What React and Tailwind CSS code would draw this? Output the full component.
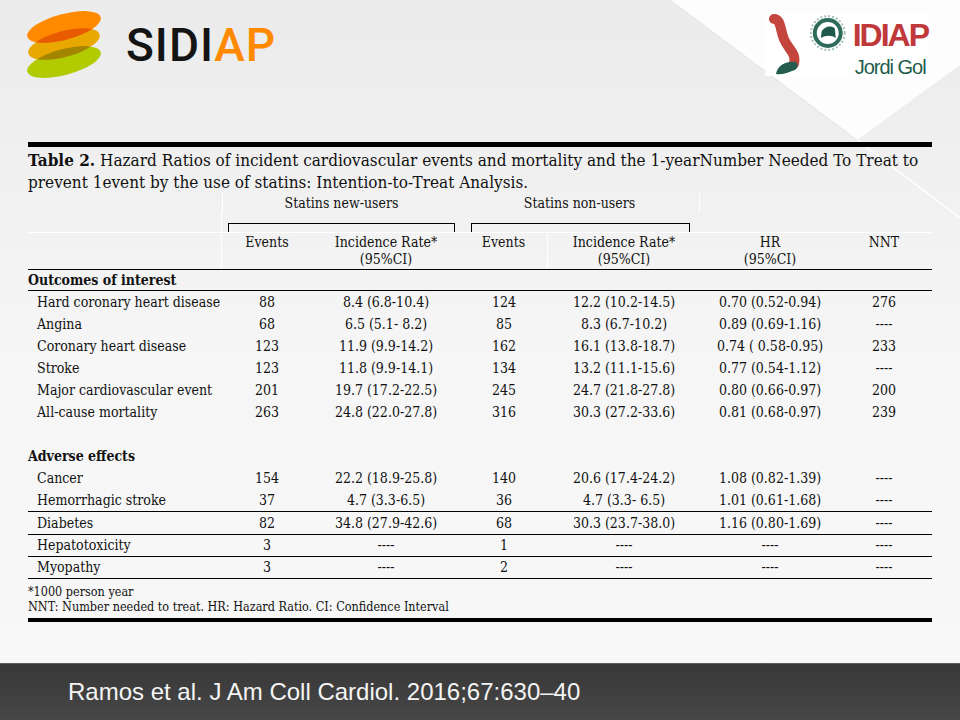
import React from "react";

const COLS = "grid grid-cols-[194px_90px_148px_88px_152px_140px_88px]";

const outcomes = [
  ["Hard coronary heart disease", "88", "8.4 (6.8-10.4)", "124", "12.2 (10.2-14.5)", "0.70 (0.52-0.94)", "276"],
  ["Angina", "68", "6.5 (5.1- 8.2)", "85", "8.3 (6.7-10.2)", "0.89 (0.69-1.16)", "----"],
  ["Coronary heart disease", "123", "11.9 (9.9-14.2)", "162", "16.1 (13.8-18.7)", "0.74 ( 0.58-0.95)", "233"],
  ["Stroke", "123", "11.8 (9.9-14.1)", "134", "13.2 (11.1-15.6)", "0.77 (0.54-1.12)", "----"],
  ["Major cardiovascular event", "201", "19.7 (17.2-22.5)", "245", "24.7 (21.8-27.8)", "0.80 (0.66-0.97)", "200"],
  ["All-cause mortality", "263", "24.8 (22.0-27.8)", "316", "30.3 (27.2-33.6)", "0.81 (0.68-0.97)", "239"],
];

// last flag = black rule under the row
const adverse = [
  ["Cancer", "154", "22.2 (18.9-25.8)", "140", "20.6 (17.4-24.2)", "1.08 (0.82-1.39)", "----", false],
  ["Hemorrhagic stroke", "37", "4.7 (3.3-6.5)", "36", "4.7 (3.3- 6.5)", "1.01 (0.61-1.68)", "----", true],
  ["Diabetes", "82", "34.8 (27.9-42.6)", "68", "30.3 (23.7-38.0)", "1.16 (0.80-1.69)", "----", true],
  ["Hepatotoxicity", "3", "----", "1", "----", "----", "----", true],
  ["Myopathy", "3", "----", "2", "----", "----", "----", true],
];

const Row = ({ cells, ruled, tall }) => (
  <div
    className={`${COLS} ${tall ? "h-[23px]" : "h-[22px]"} items-center ${
      ruled ? "border-b border-black" : ""
    }`}
  >
    <div className="pl-[9px] whitespace-nowrap">{cells[0]}</div>
    {cells.slice(1, 7).map((c, i) => (
      <div key={i} className="text-center whitespace-nowrap">
        {c}
      </div>
    ))}
  </div>
);

const SidiapLogo = () => (
  <div className="flex items-center gap-[22px]">
    <svg width="80" height="72" viewBox="0 0 80 72" className="isolate">
      <ellipse cx="40" cy="54" rx="38" ry="13" fill="#b2ca00" transform="rotate(-15 40 54)" className="mix-blend-multiply" />
      <ellipse cx="40" cy="36" rx="37" ry="13" fill="#e9a800" transform="rotate(-15 40 36)" className="mix-blend-multiply" />
      <ellipse cx="40" cy="19" rx="38" ry="13" fill="#ff8a00" transform="rotate(-15 40 19)" className="mix-blend-multiply" />
    </svg>
    <div className="font-['Roboto',sans-serif] font-medium text-[46px] leading-none tracking-[1px] mt-[2px]">
      <span className="text-[#141414]">SIDI</span>
      <span className="text-[#ff8a00]">AP</span>
    </div>
  </div>
);

const IdiapLogo = () => (
  <div className="mt-[5px] w-[163px] h-[63px] bg-white flex">
    <svg width="88" height="63" viewBox="0 0 88 63">
      <path
        d="M9 6 C16 6 15 16 19 26 C23 36 32 40 29 51"
        fill="none"
        stroke="#c4443e"
        strokeWidth="10"
        strokeLinecap="round"
      />
      <path d="M11 61 C13 52 21 48 31 49 C35 53 32 57 27 58 C22 60 17 62 11 61 Z" fill="#245d4e" />
      <circle cx="63" cy="20" r="13" fill="none" stroke="#2d6b5a" strokeWidth="4" />
      <circle cx="63" cy="20" r="17" fill="none" stroke="#5f8f80" strokeWidth="2" strokeDasharray="2 2" opacity="0.55" />
      <path d="M56 25 L57 18 C60 13 66 12 70 15 L71 25 C67 22 61 22 56 25 Z" fill="#1d5a4b" />
    </svg>
    <div className="flex flex-col items-start font-['Liberation_Sans',sans-serif]">
      <div className="text-[#c0393a] font-bold text-[32px] leading-none tracking-[-2px] mt-[6px]">IDIAP</div>
      <div className="text-[#1f5c4c] text-[20px] leading-none tracking-[-1px] mt-[6px] ml-[2px]">Jordi Gol</div>
    </div>
  </div>
);

export default function App() {
  return (
    <div className="relative w-[960px] h-[720px] overflow-hidden bg-gradient-to-b from-[#ebebeb] via-[#f6f6f6] to-[#f8f8f8] flex flex-col">
      {/* background folds */}
      <svg className="absolute left-0 top-0" width="960" height="663" viewBox="0 0 960 663">
        <polygon points="670,0 857,140 960,65 960,0" fill="#fdfdfd" />
        <line x1="857" y1="140" x2="960" y2="218" stroke="#ffffff" strokeWidth="1.5" />
        <line x1="670" y1="0" x2="857" y2="140" stroke="#e2e2e2" strokeWidth="1" />
      </svg>

      {/* logos */}
      <div className="relative h-[142px] flex justify-between items-start pl-[24px] pr-[32px] pt-[8px]">
        <SidiapLogo />
        <IdiapLogo />
      </div>

      {/* table */}
      <div className="relative px-[28px] text-[#111] font-['DejaVu_Serif_Condensed','Liberation_Serif',serif] text-[14px]">
        <div className="h-[5px] bg-black" />
        <p className="mt-[2px] text-[17px] leading-[22px]">
          <span className="font-bold">Table 2.</span> Hazard Ratios of incident cardiovascular events and mortality and the 1-yearNumber Needed To Treat to prevent 1event by the use of statins: Intention-to-Treat Analysis.
        </p>

        <div className={`${COLS} h-[20px] leading-[20px]`}>
          <div />
          <div className="col-span-2 text-center border-l border-white">Statins new-users</div>
          <div className="col-span-2 text-center border-r border-white">Statins non-users</div>
        </div>
        <div className={`${COLS} h-[19px]`}>
          <div className="border-r border-white" />
          <div className="col-span-2 pl-[6px] pr-[5px]">
            <div className="mt-[10px] h-[9px] border-t border-x border-black" />
          </div>
          <div className="col-span-2 pl-[11px] pr-[10px]">
            <div className="mt-[10px] h-[9px] border-t border-x border-black" />
          </div>
        </div>

        <div className={`${COLS} h-[38px] border-t border-white border-b border-b-black pt-[1px] leading-[17px] text-center`}>
          <div className="border-r border-white" />
          <div>Events</div>
          <div>
            Incidence Rate*
            <br />
            (95%CI)
          </div>
          <div className="border-r border-white">Events</div>
          <div>
            Incidence Rate*
            <br />
            (95%CI)
          </div>
          <div>
            HR
            <br />
            (95%CI)
          </div>
          <div>NNT</div>
        </div>

        <div className="h-[21px] leading-[20px] font-bold border-b border-black">Outcomes of interest</div>
        {outcomes.map((r) => (
          <Row key={r[0]} cells={r} />
        ))}
        <div className="h-[22px]" />
        <div className="h-[22px] leading-[22px] font-bold">Adverse effects</div>
        {adverse.map((r) => (
          <Row key={r[0]} cells={r} ruled={r[7]} tall={r[0] === "Hemorrhagic stroke" || r[0] === "Diabetes"} />
        ))}

        <div className="pt-[5px] text-[12.5px] leading-[15px]">
          <p>*1000 person year</p>
          <p>NNT: Number needed to treat. HR: Hazard Ratio. CI: Confidence Interval</p>
        </div>
        <div className="mt-[4px] h-[4px] bg-black" />
      </div>

      {/* footer */}
      <div className="relative mt-auto h-[57px] bg-gradient-to-b from-[#383838] to-[#474747] border-t border-[#5c5c5c] flex items-center pl-[68px]">
        <span className="text-[#f4f4f4] text-[24px] font-['Liberation_Sans',sans-serif]">
          Ramos et al. J Am Coll Cardiol. 2016;67:630–40
        </span>
      </div>
    </div>
  );
}
